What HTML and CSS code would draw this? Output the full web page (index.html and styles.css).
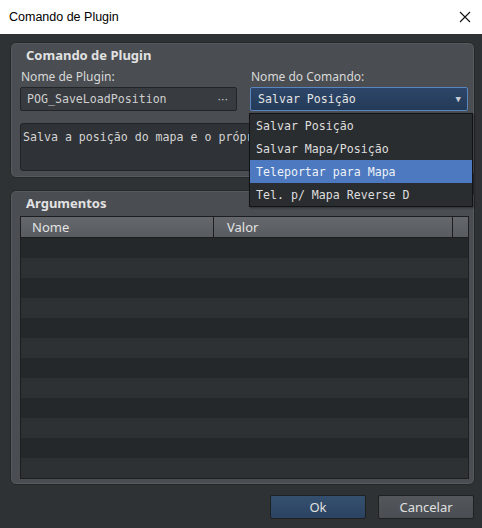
FILE: index.html
```html
<!DOCTYPE html>
<html lang="pt">
<head>
    <meta charset="UTF-8">
    <title>Comando de Plugin</title>
    <link rel="stylesheet" href="styles.css">
</head>
<body>
<div class="window">
    <div class="titlebar">
        <span class="title">Comando de Plugin</span>
        <svg class="close" width="12" height="12" viewBox="0 0 12 12">
            <path d="M1 1 L11 11 M11 1 L1 11" stroke="#111" stroke-width="1.1" fill="none"/>
        </svg>
    </div>

    <div class="dialog">
        <div class="group group-command">
            <div class="group-title">Comando de Plugin</div>
            <div class="fields">
                <div class="field">
                    <label>Nome de Plugin:</label>
                    <div class="input">
                        <span>POG_SaveLoadPosition</span>
                        <span class="dots">···</span>
                    </div>
                </div>
                <div class="field">
                    <label>Nome do Comando:</label>
                    <div class="combo">
                        <span>Salvar Posição</span>
                        <span class="arrow">▼</span>
                    </div>
                    <ul class="dropdown">
                        <li>Salvar Posição</li>
                        <li>Salvar Mapa/Posição</li>
                        <li class="selected">Teleportar para Mapa</li>
                        <li>Tel. p/ Mapa Reverse D</li>
                    </ul>
                </div>
            </div>
            <div class="description">Salva a posição do mapa e o próprio evento.</div>
        </div>

        <div class="group group-args">
            <div class="group-title">Argumentos</div>
            <div class="args-table">
                <div class="args-head">
                    <div class="col-name">Nome</div>
                    <div class="col-value">Valor</div>
                    <div class="col-corner"></div>
                </div>
                <div class="args-body" id="argsBody"></div>
            </div>
        </div>

        <div class="buttons">
            <button class="btn btn-ok">Ok</button>
            <button class="btn">Cancelar</button>
        </div>
    </div>
</div>

<script>
    // empty striped rows for the arguments list
    const body = document.getElementById('argsBody');
    for (let i = 0; i < 12; i++) {
        const row = document.createElement('div');
        row.className = 'args-row';
        body.appendChild(row);
    }
</script>
</body>
</html>
```

FILE: styles.css
```css
body {
    margin: 0;
    background-color: #2f3235;
    font-family: "Noto Sans", "Open Sans", sans-serif;
    color: #dcdcdc;
}

.window {
    width: 482px;
    height: 528px;
    overflow: hidden;
}

.titlebar {
    height: 34px;
    background-color: #ffffff;
    display: flex;
    align-items: center;
    justify-content: space-between;
    padding: 0 10px 0 9px;
    font-family: "Liberation Sans", Arial, sans-serif;
    font-size: 12.5px;
    color: #000;
}

.close {
    margin-right: 1px;
}

.dialog {
    padding: 8px 7px 0 10px;
    display: flex;
    flex-direction: column;
}

.group {
    background-color: #4a4e52;
    border: 1px solid #25282a;
    border-radius: 6px;
    box-shadow: inset 0 0 0 1px #565a5e;
    padding: 3px 5px 0 9px;
    box-sizing: border-box;
}

.group-title {
    font-weight: bold;
    font-size: 13px;
    color: #e2e2e2;
    padding-left: 6px;
    height: 19px;
    line-height: 19px;
}

.group-command {
    height: 136px;
}

.fields {
    display: grid;
    grid-template-columns: 217px 218px;
    column-gap: 13px;
}

.field {
    position: relative;
}

.field label {
    display: block;
    font-size: 12px;
    height: 16px;
    line-height: 16px;
    margin-top: 4px;
    padding-left: 1px;
    color: #d8d8d8;
}

.input,
.combo {
    height: 24px;
    margin-top: 2px;
    box-sizing: border-box;
    display: flex;
    align-items: center;
    justify-content: space-between;
    font-family: "DejaVu Sans Mono", monospace;
    font-size: 11.6px;
    border-radius: 2px;
}

.input {
    background-color: #383c40;
    border: 1px solid #222528;
    padding: 0 8px 0 6px;
    color: #cfcfcf;
}

.dots {
    font-family: "DejaVu Sans", sans-serif;
    font-size: 11px;
    color: #d0d0d0;
}

.combo {
    background: linear-gradient(#2d4669, #243a58);
    border: 1px solid #5a86bf;
    padding: 0 6px 0 7px;
    color: #e4e4e4;
}

.arrow {
    font-size: 9px;
    color: #c8ccd2;
}

.dropdown {
    position: absolute;
    left: -1px;
    top: 48px;
    width: 222px;
    margin: 0;
    padding: 0;
    list-style: none;
    background-color: #2a2d30;
    border: 1px solid #111315;
    box-shadow: 1px 1px 2px rgba(0, 0, 0, 0.4);
    font-family: "DejaVu Sans Mono", monospace;
    font-size: 11.6px;
    color: #dedede;
    z-index: 2;
}

.dropdown li {
    height: 23px;
    line-height: 24px;
    padding-left: 6px;
}

.dropdown li.selected {
    background-color: #4c79bf;
    color: #eef2f8;
}

.description {
    margin-top: 12px;
    height: 48px;
    box-sizing: border-box;
    background-color: #2f3236;
    border: 1px solid #222528;
    border-radius: 3px;
    padding: 6px 2px;
    font-family: "DejaVu Sans Mono", monospace;
    font-size: 11.6px;
    color: #d4d4d4;
    white-space: nowrap;
    overflow: hidden;
}

.group-args {
    margin-top: 12px;
    height: 295px;
}

.args-table {
    margin-top: 3px;
    width: 449px;
    border: 1px solid #1c1e20;
    box-sizing: border-box;
}

.args-head {
    display: flex;
    height: 20px;
    background: linear-gradient(#64686c, #585c60);
    border-bottom: 1px solid #1c1e20;
    font-size: 13px;
    line-height: 20px;
    color: #e2e2e2;
}

.col-name {
    box-sizing: border-box;
    width: 193px;
    padding-left: 11px;
    border-right: 1px solid #1c1e20;
}

.col-value {
    flex: 1;
    padding-left: 13px;
    border-right: 1px solid #1c1e20;
}

.col-corner {
    width: 15px;
}

.args-row {
    height: 20px;
}

.args-row:nth-child(odd) {
    background-color: #25282b;
}

.args-row:nth-child(even) {
    background-color: #2e3134;
}

.buttons {
    display: flex;
    justify-content: flex-end;
    gap: 12px;
    margin-top: 10px;
    padding-right: 1px;
}

.btn {
    width: 96px;
    height: 24px;
    border: 1px solid #1e2022;
    border-radius: 2px;
    background: linear-gradient(#53575b, #4a4e52);
    color: #e0e0e0;
    font-family: "Noto Sans", sans-serif;
    font-size: 13px;
    padding: 0;
}

.btn-ok {
    background: linear-gradient(#35506f, #2b4361);
}
```
